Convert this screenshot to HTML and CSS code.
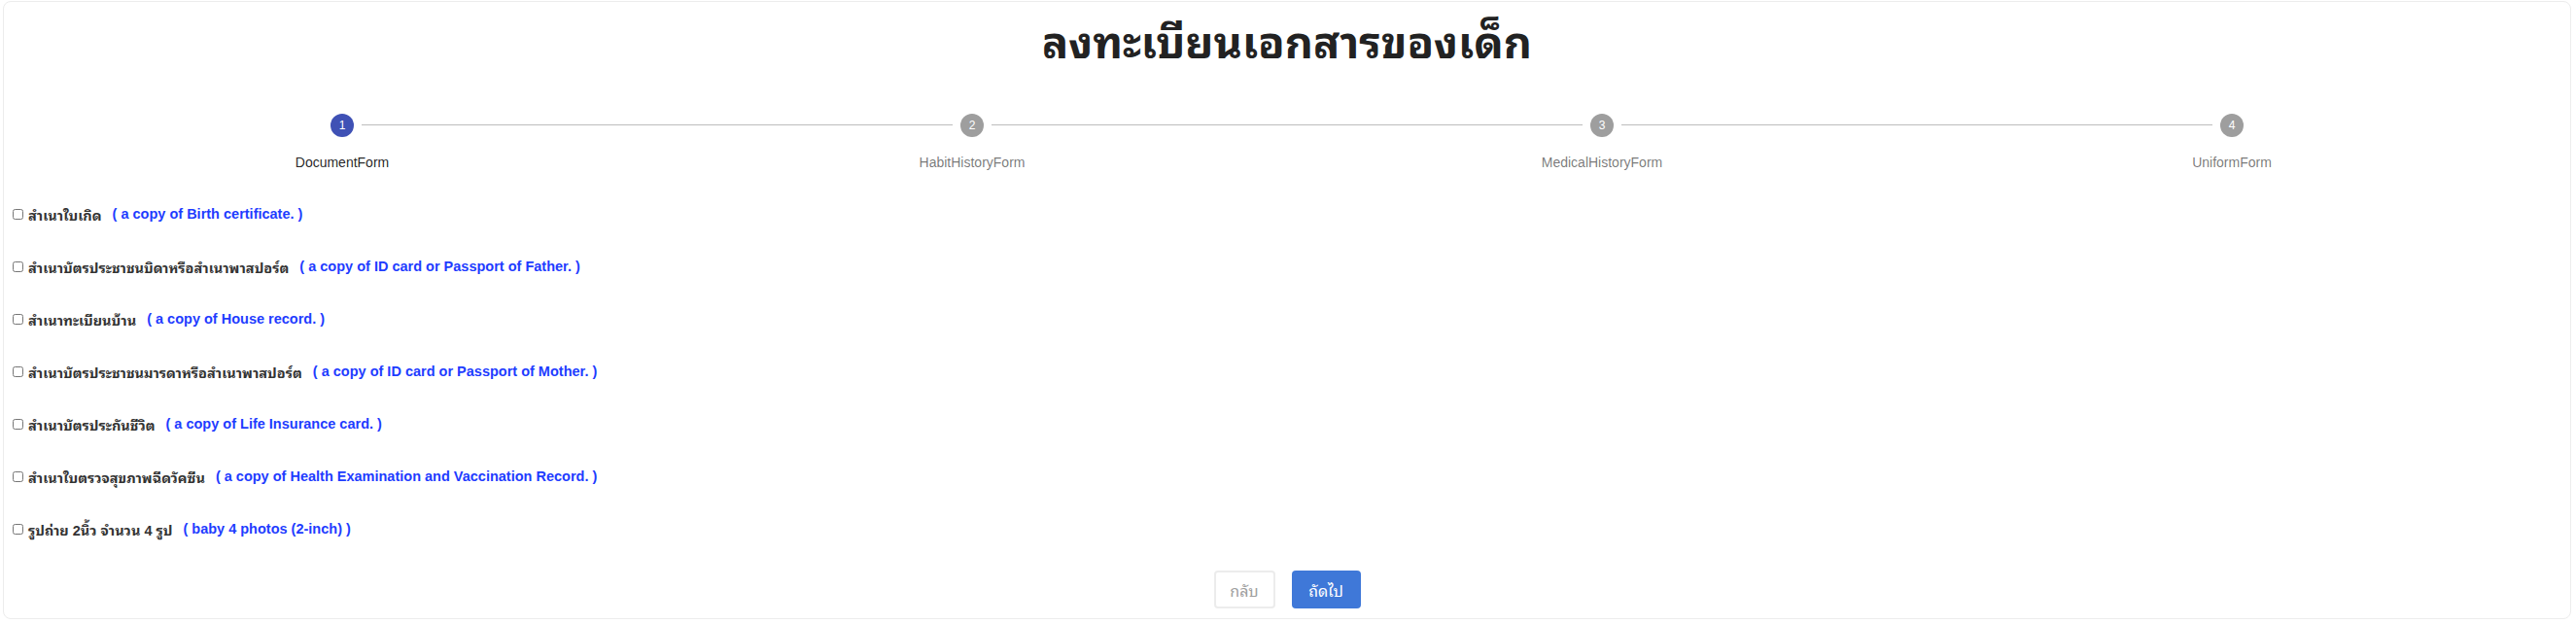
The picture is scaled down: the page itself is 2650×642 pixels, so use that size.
FILE: index.html
```html
<!DOCTYPE html>
<html lang="th">
<head>
<meta charset="utf-8">
<title>ลงทะเบียนเอกสารของเด็ก</title>
<link rel="stylesheet" href="styles.css">
</head>
<body>
<div class="card">
  <div class="title-wrap"><h1 class="title">ลงทะเบียนเอกสารของเด็ก</h1></div>
  <div class="stepper">
    <div class="step active">
      <div class="step-icon">1</div>
      <div class="step-label">DocumentForm</div>
    </div>
    <div class="step">
      <div class="connector"></div>
      <div class="step-icon">2</div>
      <div class="step-label">HabitHistoryForm</div>
    </div>
    <div class="step">
      <div class="connector"></div>
      <div class="step-icon">3</div>
      <div class="step-label">MedicalHistoryForm</div>
    </div>
    <div class="step">
      <div class="connector"></div>
      <div class="step-icon">4</div>
      <div class="step-label">UniformForm</div>
    </div>
  </div>
  <div class="doc-list">
    <label class="doc-row"><input type="checkbox" class="doc-check"><span class="doc-th">สำเนาใบเกิด</span><span class="doc-en">( a copy of Birth certificate. )</span></label>
    <label class="doc-row"><input type="checkbox" class="doc-check"><span class="doc-th">สำเนาบัตรประชาชนบิดาหรือสำเนาพาสปอร์ต</span><span class="doc-en">( a copy of ID card or Passport of Father. )</span></label>
    <label class="doc-row"><input type="checkbox" class="doc-check"><span class="doc-th">สำเนาทะเบียนบ้าน</span><span class="doc-en">( a copy of House record. )</span></label>
    <label class="doc-row"><input type="checkbox" class="doc-check"><span class="doc-th">สำเนาบัตรประชาชนมารดาหรือสำเนาพาสปอร์ต</span><span class="doc-en">( a copy of ID card or Passport of Mother. )</span></label>
    <label class="doc-row"><input type="checkbox" class="doc-check"><span class="doc-th">สำเนาบัตรประกันชีวิต</span><span class="doc-en">( a copy of Life Insurance card. )</span></label>
    <label class="doc-row"><input type="checkbox" class="doc-check"><span class="doc-th">สำเนาใบตรวจสุขภาพฉีดวัคซีน</span><span class="doc-en">( a copy of Health Examination and Vaccination Record. )</span></label>
    <label class="doc-row"><input type="checkbox" class="doc-check"><span class="doc-th">รูปถ่าย 2นิ้ว จำนวน 4 รูป</span><span class="doc-en">( baby 4 photos (2-inch) )</span></label>
  </div>
  <div class="actions">
    <button class="btn btn-back" type="button">กลับ</button>
    <button class="btn btn-next" type="button">ถัดไป</button>
  </div>
</div>
</body>
</html>
```

FILE: styles.css
```css
html, body {
  margin: 0;
  padding: 0;
  background: #ffffff;
}
body {
  font-family: "Liberation Sans", "Noto Sans Thai Looped", "Noto Sans Thai", "Noto Sans", sans-serif;
  color: #212121;
}
.card {
  margin: 1px 5px 0 3px;
  border: 1px solid #ececec;
  border-radius: 8px;
  background: #fff;
  padding-bottom: 10px;
}
.title-wrap {
  height: 91px;
  display: flex;
  justify-content: center;
}
.title {
  margin: 6px 0 0;
  font-size: 45px;
  line-height: 64px;
  font-weight: 700;
  color: #222;
  font-family: "Noto Sans Thai Looped", "Noto Sans Thai", "Noto Sans", "Liberation Sans", sans-serif;
}
.stepper {
  display: flex;
  padding: 24px;
}
.step {
  flex: 1;
  position: relative;
  display: flex;
  flex-direction: column;
  align-items: center;
}
.connector {
  position: absolute;
  top: 11px;
  left: calc(-50% + 20px);
  right: calc(50% + 20px);
  border-top: 1px solid #bdbdbd;
}
.step-icon {
  width: 24px;
  height: 24px;
  border-radius: 50%;
  background: #9e9e9e;
  color: #fff;
  font-size: 12px;
  line-height: 24px;
  text-align: center;
  font-family: "Liberation Sans", sans-serif;
}
.step.active .step-icon {
  background: #3f51b5;
}
.step-label {
  margin-top: 16px;
  font-size: 14px;
  line-height: 20px;
  color: rgba(0, 0, 0, 0.54);
  font-family: "Liberation Sans", sans-serif;
}
.step.active .step-label {
  color: rgba(0, 0, 0, 0.87);
}
.doc-list {
  display: flex;
  flex-direction: column;
}
.doc-row {
  display: flex;
  align-items: center;
  height: 20px;
  padding: 9px 0 25px;
  font-size: 14.5px;
  font-weight: 700;
}
.doc-check {
  width: 11px;
  height: 11px;
  margin: 0 5px 0 9px;
}
.doc-th {
  color: #333;
}
.doc-en {
  margin-left: 11px;
  color: #1e3cff;
}
.actions {
  display: flex;
  justify-content: center;
  gap: 17px;
  margin-top: 8px;
}
.btn {
  height: 39px;
  border-radius: 4px;
  font-size: 16px;
  font-family: "Noto Sans Thai Looped", "Noto Sans Thai", "Liberation Sans", sans-serif;
  cursor: pointer;
}
.btn-back {
  width: 63px;
  background: #fff;
  border: 2px solid #ececec;
  color: #9e9e9e;
  padding: 0;
}
.btn-next {
  width: 71px;
  background: #3f78d8;
  border: none;
  color: #fff;
  padding: 0;
}
```
